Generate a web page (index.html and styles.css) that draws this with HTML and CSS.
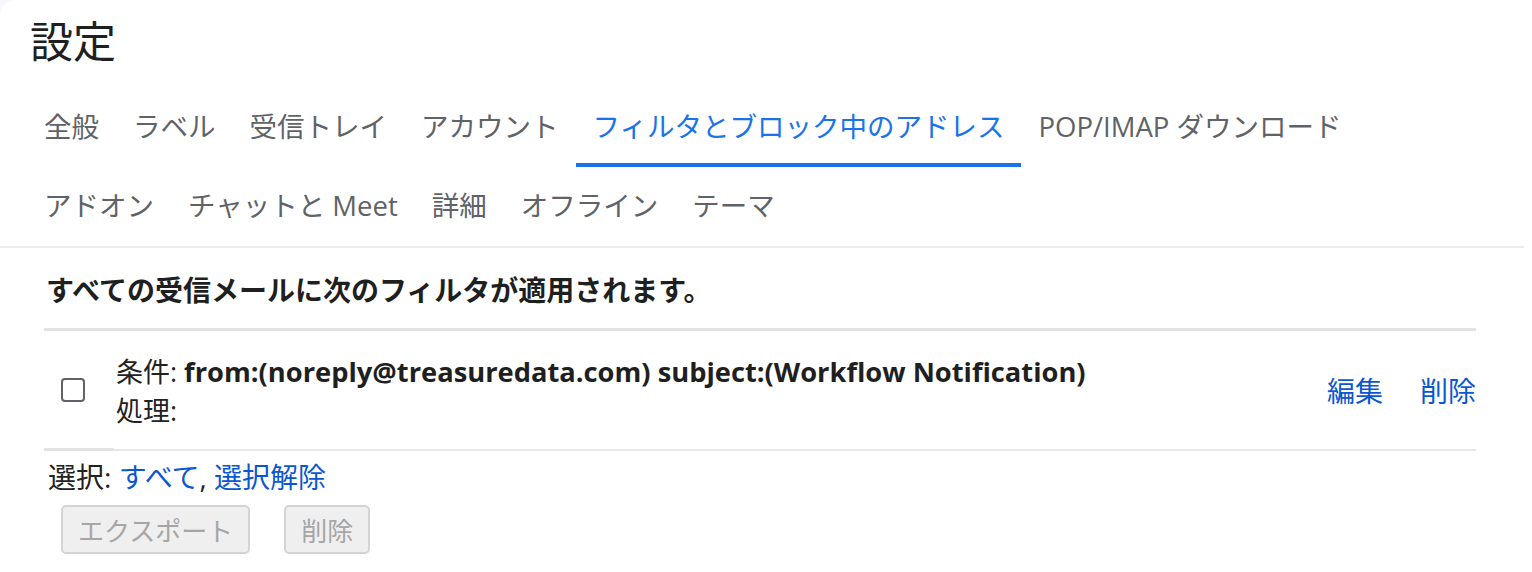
FILE: index.html
```html
<!DOCTYPE html>
<html lang="ja">
<head>
<meta charset="utf-8">
<title>設定</title>
<link rel="stylesheet" href="styles.css">
</head>
<body>
<div class="panel">
  <h1 class="title">設定</h1>
  <nav class="tabs">
    <div class="tab-row">
      <div class="tab">全般</div>
      <div class="tab">ラベル</div>
      <div class="tab">受信トレイ</div>
      <div class="tab">アカウント</div>
      <div class="tab active">フィルタとブロック中のアドレス</div>
      <div class="tab">POP/IMAP ダウンロード</div>
    </div>
    <div class="tab-row">
      <div class="tab">アドオン</div>
      <div class="tab">チャットと Meet</div>
      <div class="tab">詳細</div>
      <div class="tab">オフライン</div>
      <div class="tab">テーマ</div>
    </div>
  </nav>
  <section class="filters">
    <h2 class="intro">すべての受信メールに次のフィルタが適用されます。</h2>
    <div class="filter-list">
      <div class="filter-row">
        <div class="cell-check"><span class="checkbox"></span></div>
        <div class="cell-desc">
          <div class="line">条件: <b>from:(noreply@treasuredata.com) subject:(Workflow Notification)</b></div>
          <div class="line">処理:</div>
        </div>
        <div class="cell-actions">
          <a class="link">編集</a>
          <a class="link">削除</a>
        </div>
      </div>
    </div>
    <div class="select-line">選択: <a class="link">すべて</a>, <a class="link">選択解除</a></div>
    <div class="buttons">
      <button class="btn" disabled>エクスポート</button>
      <button class="btn" disabled>削除</button>
    </div>
  </section>
</div>
</body>
</html>
```

FILE: styles.css
```css
html, body {
  margin: 0;
  padding: 0;
  background: #f6f8fc;
}

body {
  font-family: "Open Sans", "Noto Sans CJK JP", sans-serif;
  color: #1f1f1f;
}

.panel {
  background: #ffffff;
  border-top-left-radius: 16px;
  height: 572px;
  overflow: hidden;
}

.title {
  margin: 0;
  height: 88px;
  padding-left: 30px;
  font-size: 43px;
  font-weight: 400;
  line-height: 84px;
  color: #1f1f1f;
}

.tabs {
  margin-right: 8px;
  padding-left: 27px;
  border-bottom: 2px solid #ebebf0;
}

.tab-row {
  display: flex;
}

.tab {
  height: 79px;
  padding: 0 17px;
  font-size: 27.5px;
  line-height: 78px;
  color: #5f6368;
  white-space: nowrap;
}

.tab.active {
  color: #1a73e8;
  box-shadow: inset 0 -4px 0 #1a73e8;
}

.filters {
  padding: 22px 56px 0 44px;
}

.intro {
  margin: 0 0 18px 2px;
  font-size: 28px;
  font-weight: 700;
  line-height: 40px;
  color: #1f1f1f;
}

.filter-list {
  border-top: 3px solid #e3e3e3;
}

.filter-row {
  display: flex;
  align-items: stretch;
}

.cell-check {
  width: 70px;
  display: flex;
  align-items: center;
  padding-left: 17px;
  box-sizing: border-box;
  border-bottom: 3px solid #e3e3e3;
}

.checkbox {
  display: block;
  width: 24px;
  height: 24px;
  box-sizing: border-box;
  border: 2px solid #5f6368;
  border-radius: 4px;
}

.cell-desc {
  flex: 1;
  padding: 21px 0 19px 2px;
  font-size: 27px;
  line-height: 39px;
  color: #222222;
  border-bottom: 2px solid #e6e6e6;
}

.cell-desc b {
  font-weight: 700;
  font-size: 27.3px;
  color: #1f1f1f;
}

.cell-actions {
  display: flex;
  align-items: center;
  gap: 37px;
  font-size: 28px;
  border-bottom: 2px solid #e6e6e6;
}

.link {
  color: #0b57d0;
  text-decoration: none;
}

.select-line {
  margin-top: 6px;
  padding-left: 4px;
  font-size: 28px;
  line-height: 40px;
  color: #222222;
}

.buttons {
  display: flex;
  gap: 34px;
  margin-top: 8px;
  padding-left: 17px;
}

.btn {
  height: 49px;
  padding: 0 15px;
  font-family: "Open Sans", "Noto Sans CJK JP", sans-serif;
  font-size: 26px;
  color: #a6a6a6;
  background: #efefef;
  border: 2px solid #d4d4d4;
  border-radius: 5px;
}
```
